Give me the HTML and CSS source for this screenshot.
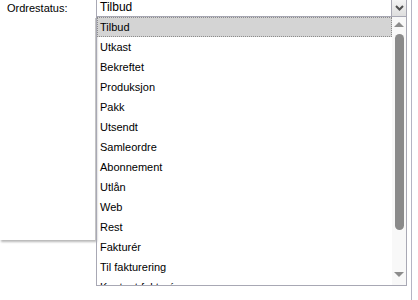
FILE: index.html
```html
<!DOCTYPE html>
<html lang="no">
<head>
    <meta charset="UTF-8">
    <title>Ordrestatus</title>
    <link rel="stylesheet" href="styles.css">
</head>
<body>
    <div class="frame">
        <div class="side">
            <div class="label">Ordrestatus:</div>
            <div class="panel"></div>
        </div>

        <div class="field">
            <div class="select">
                <span class="select-value">Tilbud</span>
                <span class="select-btn">
                    <svg width="9" height="6" viewBox="0 0 9 6"><path d="M1 1 L4.5 4.5 L8 1" fill="none" stroke="#505050" stroke-width="2"/></svg>
                </span>
            </div>

            <div class="dropdown">
                <ul class="options">
                    <li class="active">Tilbud</li>
                    <li>Utkast</li>
                    <li>Bekreftet</li>
                    <li>Produksjon</li>
                    <li>Pakk</li>
                    <li>Utsendt</li>
                    <li>Samleordre</li>
                    <li>Abonnement</li>
                    <li>Utlån</li>
                    <li>Web</li>
                    <li>Rest</li>
                    <li>Fakturér</li>
                    <li>Til fakturering</li>
                    <li>Kontant fakturér</li>
                </ul>
                <div class="scrollbar">
                    <span class="arrow up"></span>
                    <span class="thumb"></span>
                    <span class="arrow down"></span>
                </div>
            </div>
        </div>
    </div>
</body>
</html>
```

FILE: styles.css
```css
body {
    margin: 0;
    background: #fff;
    font-family: "Liberation Sans", Arial, sans-serif;
    font-size: 11px;
    color: #000;
}

.frame {
    display: flex;
    width: 411px;
    height: 300px;
    border-right: 1px solid #b4b4c4;
    overflow: hidden;
}

/* linke kolonne */
.side {
    width: 96px;
    flex-shrink: 0;
}

.label {
    padding: 2px 0 0 7px;
    height: 16px;
    line-height: 13px;
}

.panel {
    width: 95px;
    height: 222px;
    border-right: 1px solid #c4c4c4;
    box-shadow: 1px 2px 2px rgba(0, 0, 0, 0.28);
}

/* nedtrekksfelt */
.field {
    width: 311px;
    flex-shrink: 0;
}

.select {
    display: flex;
    height: 16px;
    border-left: 1px solid #a8a8b4;
    border-bottom: 1px solid #a8a8b4;
}

.select-value {
    flex: 1;
    padding-left: 3px;
    line-height: 15px;
    font-size: 12px;
}

.select-btn {
    width: 14px;
    display: flex;
    align-items: center;
    justify-content: center;
    background: linear-gradient(#f4f4f4, #dedede);
    border-left: 1px solid #a8a8b4;
    border-right: 1px solid #a8a8b4;
}

.dropdown {
    display: flex;
    height: 268px;
    border: 1px solid #a8a8b4;
    border-top: none;
}

.options {
    flex: 1;
    list-style: none;
    margin: 0;
    padding: 0;
    overflow: hidden;
}

.options li {
    height: 20px;
    line-height: 20px;
    padding-left: 3px;
    white-space: nowrap;
}

.options li.active {
    background: #d4d4d4;
    border: 1px dotted #8c8c8c;
    line-height: 18px;
    height: 18px;
    padding-left: 2px;
}

/* rullefelt */
.scrollbar {
    width: 14px;
    background: #f8f8f8;
    display: flex;
    flex-direction: column;
    align-items: center;
    padding-top: 5px;
}

.arrow {
    width: 0;
    height: 0;
    border-left: 5px solid transparent;
    border-right: 5px solid transparent;
}

.arrow.up {
    border-bottom: 5px solid #8c8c8c;
}

.arrow.down {
    border-top: 5px solid #8c8c8c;
    margin-top: 42px;
}

.thumb {
    width: 9px;
    height: 196px;
    margin-top: 7px;
    background: #8a8a8a;
    border-radius: 5px;
}
```
